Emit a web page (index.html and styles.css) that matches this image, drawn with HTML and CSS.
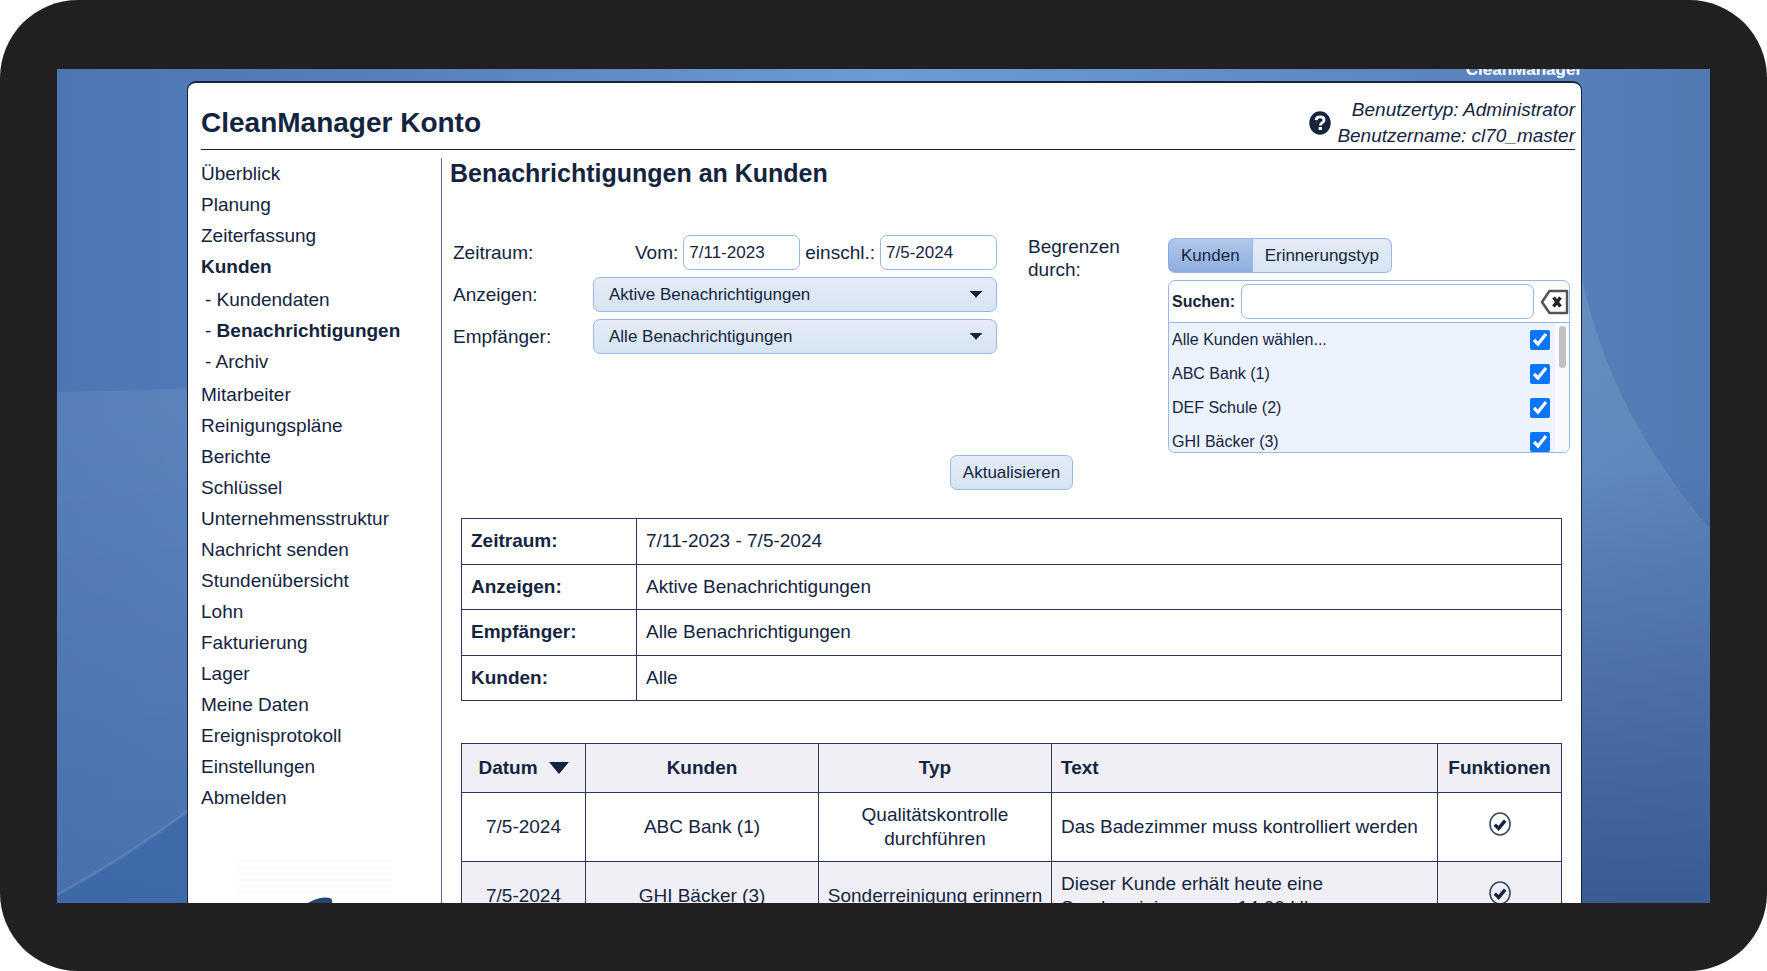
FILE: index.html
```html
<!DOCTYPE html>
<html lang="de">
<head>
<meta charset="utf-8">
<title>CleanManager Konto</title>
<link rel="stylesheet" href="styles.css">
</head>
<body>
<div class="device">
  <div class="screen">
    <svg class="backdrop" viewBox="0 0 1653 834" preserveAspectRatio="none" aria-hidden="true">
      <defs>
        <linearGradient id="arc" x1="0" y1="0" x2="0" y2="1">
          <stop offset="0" stop-color="#fff" stop-opacity=".07"/>
          <stop offset="1" stop-color="#fff" stop-opacity="0"/>
        </linearGradient>
        <linearGradient id="sweep" x1="0" y1="0" x2="0" y2="1">
          <stop offset="0" stop-color="#a0c4d8" stop-opacity=".22"/>
          <stop offset=".6" stop-color="#a0c4d8" stop-opacity=".08"/>
          <stop offset="1" stop-color="#a0c4d8" stop-opacity="0"/>
        </linearGradient>
        <linearGradient id="shade" x1="0" y1="0" x2="0" y2="1">
          <stop offset="0" stop-color="#37598f" stop-opacity="0"/>
          <stop offset="1" stop-color="#37598f" stop-opacity=".9"/>
        </linearGradient>
      </defs>
      <path d="M0 323 Q70 322 135 319 V834 H0Z" fill="url(#arc)"/>
      <path d="M0 826 Q70 788 135 739 V834 H0Z" fill="#3a66a6" fill-opacity=".7"/>
      <path d="M0 826 Q70 788 135 739" fill="none" stroke="#fff" stroke-opacity=".1" stroke-width="3"/>
      <path d="M1523 400 H1653 V834 H1523Z" fill="url(#shade)"/>
      <path d="M1523 200 Q1550 340 1653 460 V834 H1523Z" fill="url(#sweep)"/>
    </svg>
    <div class="brand">CleanManager</div>
    <div class="panel">
      <header class="header">
        <h1 class="title">CleanManager Konto</h1>
        <button class="help" type="button" aria-label="Hilfe">
          <svg viewBox="0 0 22 24" width="22" height="24"><ellipse cx="11" cy="12" rx="10.7" ry="11.7" fill="#14243f"/><path d="M7 9.2C7.3 6.9 8.9 5.9 11.1 5.9C13.5 5.9 15.1 7.2 15.1 9C15.1 11.6 11.3 11.7 11.3 14.6" fill="none" stroke="#fff" stroke-width="2.7"/><rect x="9.7" y="16" width="3.2" height="3" fill="#fff"/></svg>
        </button>
        <p class="user">Benutzertyp: Administrator<br>Benutzername: cl70_master</p>
      </header>
      <div class="columns">
        <nav class="menu">
          <a href="#">Überblick</a>
          <a href="#">Planung</a>
          <a href="#">Zeiterfassung</a>
          <a href="#" class="current">Kunden</a>
          <div class="submenu">
            <span>- <a href="#">Kundendaten</a></span>
            <span>- <a href="#" class="current">Benachrichtigungen</a></span>
            <span>- <a href="#">Archiv</a></span>
          </div>
          <a href="#">Mitarbeiter</a>
          <a href="#">Reinigungspläne</a>
          <a href="#">Berichte</a>
          <a href="#">Schlüssel</a>
          <a href="#">Unternehmensstruktur</a>
          <a href="#">Nachricht senden</a>
          <a href="#">Stundenübersicht</a>
          <a href="#">Lohn</a>
          <a href="#">Fakturierung</a>
          <a href="#">Lager</a>
          <a href="#">Meine Daten</a>
          <a href="#">Ereignisprotokoll</a>
          <a href="#">Einstellungen</a>
          <a href="#">Abmelden</a>
          <svg class="logo" viewBox="0 0 156 90" width="156" height="90" aria-hidden="true"><path d="M0 1H156M0 8H156M0 14H156M0 20H156M0 26H156M0 32H156" stroke="#fafafa" stroke-width="2"/><path d="M70 44Q84 36 94 38Q98 40 95 46Q90 54 84 60Q72 60 70 44Z" fill="#23476f"/></svg>
        </nav>
        <main class="content">
          <h2 class="subtitle">Benachrichtigungen an Kunden</h2>
          <form class="filters">
            <div class="fields">
              <span>Zeitraum:</span>
              <div class="period">
                <label for="from">Vom:</label>
                <input class="box date" id="from" type="text" value="7/11-2023">
                <label for="to">einschl.:</label>
                <input class="box date" id="to" type="text" value="7/5-2024">
              </div>
              <label for="show">Anzeigen:</label>
              <select class="box select" id="show"><option>Aktive Benachrichtigungen</option></select>
              <label for="receiver">Empfänger:</label>
              <select class="box select" id="receiver"><option>Alle Benachrichtigungen</option></select>
            </div>
            <div class="limit-label">Begrenzen durch:</div>
            <div class="limit">
              <div class="tabs">
                <button class="tab active" type="button">Kunden</button>
                <button class="tab" type="button">Erinnerungstyp</button>
              </div>
              <div class="picker">
                <div class="search">
                  <label for="search">Suchen:</label>
                  <input class="box query" id="search" type="text">
                  <button class="clear" type="button" aria-label="Leeren">
                    <svg viewBox="0 0 29 26" width="29" height="26"><path d="M9.5 2H27V24H9.5L2 13Z" fill="#fff" stroke="#555" stroke-width="2.5" stroke-linejoin="round"/><path d="M13.5 8.5L20.5 17.5M20.5 8.5L13.5 17.5" stroke="#222" stroke-width="3.5"/></svg>
                  </button>
                </div>
                <div class="list">
                  <div class="rows">
                    <label class="row">Alle Kunden wählen...<input class="check" type="checkbox" checked></label>
                    <label class="row">ABC Bank (1)<input class="check" type="checkbox" checked></label>
                    <label class="row">DEF Schule (2)<input class="check" type="checkbox" checked></label>
                    <label class="row">GHI Bäcker (3)<input class="check" type="checkbox" checked></label>
                  </div>
                  <div class="track"><div class="thumb"></div></div>
                </div>
              </div>
            </div>
            <button class="box submit" type="button">Aktualisieren</button>
          </form>
          <table class="grid summary">
            <tr><th>Zeitraum:</th><td>7/11-2023 - 7/5-2024</td></tr>
            <tr><th>Anzeigen:</th><td>Aktive Benachrichtigungen</td></tr>
            <tr><th>Empfänger:</th><td>Alle Benachrichtigungen</td></tr>
            <tr><th>Kunden:</th><td>Alle</td></tr>
          </table>
          <table class="grid notices">
            <colgroup><col class="col-date"><col class="col-mid"><col class="col-mid"><col><col class="col-date"></colgroup>
            <thead>
              <tr>
                <th><span class="sort">Datum <svg viewBox="0 0 20 12" width="20" height="12"><path d="M0 0H20L10 12Z" fill="#14243f"/></svg></span></th>
                <th>Kunden</th><th>Typ</th><th class="text">Text</th><th>Funktionen</th>
              </tr>
            </thead>
            <tbody>
              <tr>
                <td>7/5-2024</td><td>ABC Bank (1)</td><td>Qualitätskontrolle durchführen</td>
                <td class="text">Das Badezimmer muss kontrolliert werden</td>
                <td><button class="done" type="button" aria-label="Erledigt"><svg viewBox="0 0 22 24" width="22" height="24"><ellipse cx="11" cy="12" rx="10" ry="11" fill="none" stroke="#3c4a62" stroke-width="1.6"/><path d="M5.8 12.6L9.6 16.4L16.2 8.6" fill="none" stroke="#14243f" stroke-width="3.4"/></svg></button></td>
              </tr>
              <tr>
                <td>7/5-2024</td><td>GHI Bäcker (3)</td><td>Sonderreinigung erinnern</td>
                <td class="text">Dieser Kunde erhält heute eine Sonderreinigung um 14:00 Uhr</td>
                <td><button class="done" type="button" aria-label="Erledigt"><svg viewBox="0 0 22 24" width="22" height="24"><ellipse cx="11" cy="12" rx="10" ry="11" fill="none" stroke="#3c4a62" stroke-width="1.6"/><path d="M5.8 12.6L9.6 16.4L16.2 8.6" fill="none" stroke="#14243f" stroke-width="3.4"/></svg></button></td>
              </tr>
            </tbody>
          </table>
        </main>
      </div>
    </div>
  </div>
</div>
</body>
</html>
```
FILE: styles.css
```css
* { box-sizing: border-box; }

body {
  margin: 0;
  background: #fff;
  color: #14243f;
  font: 19px/24px "Liberation Sans", Arial, sans-serif;
}

h1, h2, p { margin: 0; }
a { color: inherit; text-decoration: none; }
button, input, select { font: inherit; color: inherit; margin: 0; }
svg { display: block; }

.device {
  height: 100vh;
  padding: 69px 57px 68px;
  border-radius: 78px;
  background: #221f20;
}

.screen {
  position: relative;
  height: 100%;
  padding: 0 128px 0 130px;
  overflow: hidden;
  background:
    linear-gradient(180deg, rgba(70, 110, 170, 0) 45%, rgba(70, 110, 170, 0.7) 100%),
    linear-gradient(90deg, #4c76b4 0%, #5580bb 20%, #6c9bd4 50%, #5c88c2 80%, #517ab3 100%);
}

.backdrop {
  position: absolute;
  inset: 0;
  width: 100%;
  height: 100%;
}

.brand {
  position: relative;
  height: 12px;
  color: #fff;
  font-size: 17px;
  font-weight: bold;
  line-height: 2px;
  text-align: right;
}

.panel {
  position: relative;
  min-height: 100%;
  padding: 0 6px 0 13px;
  border: 1px solid #14243f;
  border-top-width: 2px;
  border-radius: 9px 9px 0 0;
  background: #fff;
}

.header {
  display: flex;
  align-items: center;
  gap: 6px;
  height: 67px;
  padding-top: 14px;
  border-bottom: 1px solid #14243f;
}

.title { flex: 1; font-size: 28px; line-height: 32px; }
.help { padding: 0; border: 0; background: none; }
.user { font-style: italic; line-height: 26px; text-align: right; }

.columns { display: flex; padding-top: 8px; }

.menu {
  display: flex;
  flex-direction: column;
  width: 240px;
  line-height: 31px;
}

.current { font-weight: bold; }

.submenu {
  display: flex;
  flex-direction: column;
  padding: 2px 0 2px 4px;
}

.logo { margin: 47px 0 0 35px; }

.content {
  flex: 1;
  min-width: 0;
  border-left: 1px solid #5c6880;
}

.subtitle { padding-left: 8px; font-size: 25px; line-height: 30px; }

.filters {
  display: grid;
  grid-template-columns: 544px 140px 1fr;
  padding: 47px 5px 0 11px;
}

.fields {
  display: grid;
  grid-template-columns: 140px 404px;
  gap: 7px 0;
  align-items: center;
  align-content: start;
}

.period {
  display: flex;
  justify-content: flex-end;
  align-items: center;
  gap: 5px;
}

.box {
  height: 35px;
  border: 1px solid #9bb7e3;
  border-radius: 7px;
  background: #fff;
  font-size: 17px;
}

.date { width: 117px; padding: 0 5px; }

.select, .submit, .tab { background: linear-gradient(#e4ecf6, #d6e4f2); }

.select {
  width: 100%;
  padding: 0 15px;
  appearance: none;
  background:
    linear-gradient(to bottom right, #14243f 50%, transparent 51%) right 14px center / 6px 7px no-repeat,
    linear-gradient(to bottom left, #14243f 50%, transparent 51%) right 20px center / 6px 7px no-repeat,
    linear-gradient(#e4ecf6, #d6e4f2);
}

.limit-label { padding-left: 31px; line-height: 23px; }

.limit { padding-top: 3px; padding-left: 31px; }

.tabs { display: flex; }

.tab {
  height: 35px;
  padding: 0 12px;
  border: 1px solid #9bb7e3;
  border-left: 0;
  border-radius: 0 7px 7px 0;
  font-size: 17px;
}

.tab.active {
  border-left: 1px solid #8aa9dc;
  border-radius: 7px 0 0 7px;
  background: linear-gradient(#b1c8ea, #8eade0);
}

.picker {
  height: 173px;
  margin-top: 7px;
  border: 1px solid #9bb7e3;
  border-radius: 7px;
  overflow: hidden;
  font-size: 16px;
}

.search {
  display: flex;
  align-items: center;
  gap: 6px;
  height: 42px;
  padding-left: 3px;
  border-bottom: 1px solid #9bb7e3;
  font-weight: bold;
}

.query { flex: 1; min-width: 0; }
.clear { padding: 0; border: 0; background: none; }

.list { display: flex; height: 130px; }
.rows { flex: 1; background: #ecf2fe; }

.row {
  display: flex;
  align-items: center;
  justify-content: space-between;
  height: 34px;
  padding: 0 5px 0 3px;
}

.check { width: 20px; height: 20px; accent-color: #0a75ff; }

.track { width: 14px; padding: 3px 3px 0 4px; background: #fafafa; }
.thumb { height: 42px; border-radius: 4px; background: #c1c1c1; }

.submit {
  grid-column: 1 / -1;
  justify-self: center;
  margin-top: 2px;
  padding: 0 12px;
}

.grid {
  width: calc(100% - 32px);
  margin-left: 19px;
  border-collapse: collapse;
  table-layout: fixed;
}

.grid th, .grid td { border: 1px solid #2a3954; }

.summary { height: 183px; margin-top: 28px; }
.summary th, .summary td { padding: 0 9px; text-align: left; }
.summary th { width: 175px; }

.notices { margin-top: 42px; text-align: center; }
.col-date { width: 124px; }
.col-mid { width: 233px; }
.notices th { height: 49px; padding: 0; }
.notices td { height: 69px; padding: 0 5px; }
.notices .text { padding: 0 9px; text-align: left; }
.notices thead, .notices tbody tr:nth-child(even) { background: #f0eff6; }

.sort {
  display: flex;
  align-items: center;
  justify-content: center;
  gap: 11px;
}

.done { display: inline-block; padding: 0; border: 0; background: none; }
```
